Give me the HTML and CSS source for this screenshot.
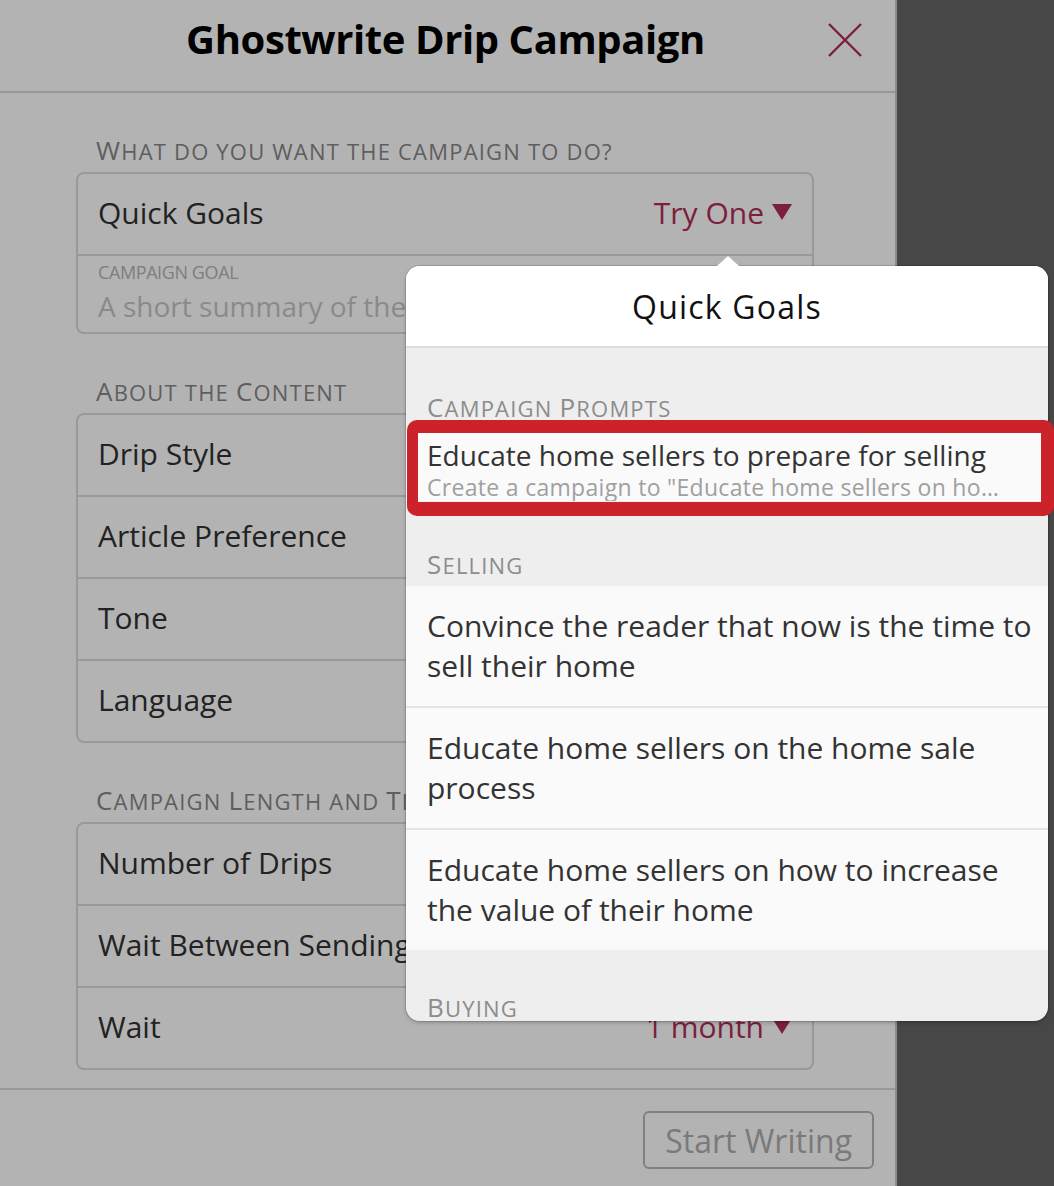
FILE: index.html
```html
<!DOCTYPE html>
<html lang="en">
<head>
  <meta charset="UTF-8" />
  <meta name="viewport" content="width=device-width, initial-scale=1.0"/>
  <title>Ghostwrite Drip Campaign</title>
  <link rel="stylesheet" href="styles.css">
</head>
<body>
  <div class="screen">
    <div class="modal">
      <header class="modal-header">
        <h1>Ghostwrite Drip Campaign</h1>
        <button class="close" aria-label="Close">
          <svg width="34" height="34" viewBox="0 0 34 34"><path d="M1 1L33 33M33 1L1 33" stroke="#7b1f3d" stroke-width="2.4" fill="none"/></svg>
        </button>
      </header>

      <main class="modal-body">
        <section class="group">
          <h2 class="group-label"><em>W</em>hat do you want the campaign to do?</h2>
          <div class="card">
            <div class="row">
              <span>Quick Goals</span>
              <span class="row-value">Try One <svg width="20" height="16" viewBox="0 0 20 16"><polygon points="0,0 20,0 10,16" fill="#7b1f3d"/></svg></span>
            </div>
            <div class="row row-field">
              <label class="field-label">Campaign Goal</label>
              <div class="placeholder">A short summary of the campaign's purpose</div>
            </div>
          </div>
        </section>

        <section class="group">
          <h2 class="group-label"><em>A</em>bout the <em>C</em>ontent</h2>
          <div class="card">
            <div class="row"><span>Drip Style</span></div>
            <div class="row"><span>Article Preference</span></div>
            <div class="row"><span>Tone</span></div>
            <div class="row"><span>Language</span></div>
          </div>
        </section>

        <section class="group">
          <h2 class="group-label"><em>C</em>ampaign <em>L</em>ength and <em>T</em>iming</h2>
          <div class="card">
            <div class="row"><span>Number of Drips</span></div>
            <div class="row"><span>Wait Between Sending</span></div>
            <div class="row">
              <span>Wait</span>
              <span class="row-value">1 month <svg width="20" height="16" viewBox="0 0 20 16"><polygon points="0,0 20,0 10,16" fill="#7b1f3d"/></svg></span>
            </div>
          </div>
        </section>
      </main>

      <footer class="modal-footer">
        <button class="start">Start Writing</button>
      </footer>
    </div>

    <div class="backdrop"></div>

    <div class="popover">
      <div class="popover-inner">
        <div class="popover-title">Quick Goals</div>

        <div class="pop-label first"><em>C</em>ampaign <em>P</em>rompts</div>
        <div class="prompt">
          <div class="prompt-title">Educate home sellers to prepare for selling</div>
          <div class="prompt-sub">Create a campaign to "Educate home sellers on how to prepare their home for sale"</div>
        </div>

        <div class="pop-label"><em>S</em>elling</div>
        <div class="goal">Convince the reader that now is the time to sell their home</div>
        <div class="goal">Educate home sellers on the home sale process</div>
        <div class="goal">Educate home sellers on how to increase the value of their home</div>

        <div class="pop-label last"><em>B</em>uying</div>
      </div>
    </div>

    <div class="callout"></div>
  </div>
</body>
</html>
```

FILE: styles.css
```css
body {
  margin: 0;
  font-family: "Open Sans", Lato, sans-serif;
}
.screen {
  position: relative;
  display: flex;
  height: 1186px;
  overflow: hidden;
  background: #474747;
}
.modal {
  width: 895px;
  flex-shrink: 0;
  background: #b3b3b3;
  border-right: 2px solid #8c8c8c;
  display: flex;
  flex-direction: column;
}
.backdrop {
  flex: 1;
}
.modal-header {
  flex-shrink: 0;
  height: 91px;
  border-bottom: 2px solid #999;
  display: grid;
  grid-template-columns: 1fr auto 1fr;
  align-items: center;
}
.modal-header h1 {
  grid-column: 2;
  margin: 0 4px 14px 0;
  font-size: 40px;
  font-weight: 700;
  letter-spacing: -0.4px;
  color: #000;
}
.close {
  grid-column: 3;
  justify-self: end;
  margin: 0 33px 12px 0;
  padding: 0;
  width: 34px;
  height: 34px;
  border: 0;
  background: none;
}
.modal-body {
  flex-shrink: 0;
  padding: 0 81px 18px 76px;
}
.group {
  margin-top: 41px;
}
.group-label {
  margin: 0 0 8px 20px;
  height: 30px;
  line-height: 32px;
  font-size: 22px;
  font-weight: 400;
  color: #5e5e5e;
  text-transform: uppercase;
  letter-spacing: 1.2px;
  white-space: nowrap;
}
.group-label em, .pop-label em {
  font-style: normal;
  font-size: 26px;
}
.card {
  border: 2px solid #999;
  border-radius: 8px;
}
.row {
  box-sizing: border-box;
  height: 80px;
  padding: 0 20px 4px;
  display: flex;
  align-items: center;
  justify-content: space-between;
  font-size: 30px;
  color: #222;
  white-space: nowrap;
}
.row + .row {
  height: 82px;
  border-top: 2px solid #999;
}
.row-value {
  display: flex;
  align-items: center;
  gap: 8px;
  color: #7b1f3d;
}
.row-field {
  height: 78px;
  padding: 0 20px;
  flex-direction: column;
  align-items: flex-start;
  justify-content: flex-start;
}
.row + .row-field {
  height: 78px;
}
.field-label {
  padding-top: 4px;
  line-height: 24px;
  font-size: 18px;
  letter-spacing: -0.4px;
  color: #7e7e7e;
  text-transform: uppercase;
}
.placeholder {
  line-height: 44px;
  font-size: 28px;
  color: #8a8a8a;
}
.modal-footer {
  display: flex;
  justify-content: flex-end;
  padding: 21px 21px;
  border-top: 2px solid #999;
}
.start {
  height: 58px;
  padding: 0 20px;
  border: 2px solid #808080;
  border-radius: 6px;
  background: transparent;
  font-family: inherit;
  font-size: 32px;
  color: #7a7a7a;
}

/* quick goals popover */
.popover {
  position: absolute;
  left: 406px;
  top: 266px;
  width: 642px;
  height: 755px;
  border-radius: 14px;
  box-shadow: 0 0 0 1px rgba(0,0,0,0.12), 0 2px 4px rgba(0,0,0,0.2);
}
.popover::before {
  content: "";
  position: absolute;
  left: 311px;
  top: -10px;
  border-left: 11px solid transparent;
  border-right: 11px solid transparent;
  border-bottom: 10px solid #fff;
}
.popover-inner {
  height: 100%;
  overflow: hidden;
  border-radius: 14px;
  background: #eee;
}
.popover-title {
  height: 80px;
  line-height: 82px;
  border-bottom: 2px solid #ddd;
  background: #fff;
  text-align: center;
  font-size: 32px;
  letter-spacing: 1.2px;
  color: #111;
}
.pop-label {
  padding: 49px 21px 6px;
  height: 30px;
  line-height: 28px;
  font-size: 22px;
  color: #8c8c8c;
  text-transform: uppercase;
  letter-spacing: 1.2px;
}
.pop-label.first {
  padding: 45px 21px 10px;
}
.pop-label.last {
  padding-top: 43px;
}
.prompt {
  padding: 4px 33px 0 21px;
  background: #fafafa;
}
.prompt-title {
  line-height: 36px;
  font-size: 28px;
  color: #333;
}
.prompt-sub {
  line-height: 28px;
  font-size: 23px;
  letter-spacing: 0.3px;
  color: #a0a0a0;
  white-space: nowrap;
  overflow: hidden;
  text-overflow: ellipsis;
}
.goal {
  padding: 20px 8px 20px 21px;
  line-height: 40px;
  font-size: 30px;
  color: #333;
  background: #fafafa;
}
.goal + .goal {
  border-top: 2px solid #e4e4e4;
}
.callout {
  position: absolute;
  left: 407px;
  top: 420px;
  width: 647px;
  height: 96px;
  box-sizing: border-box;
  border: solid #cc2229;
  border-width: 13px 13px 14px 11px;
  border-radius: 10px;
}
```
